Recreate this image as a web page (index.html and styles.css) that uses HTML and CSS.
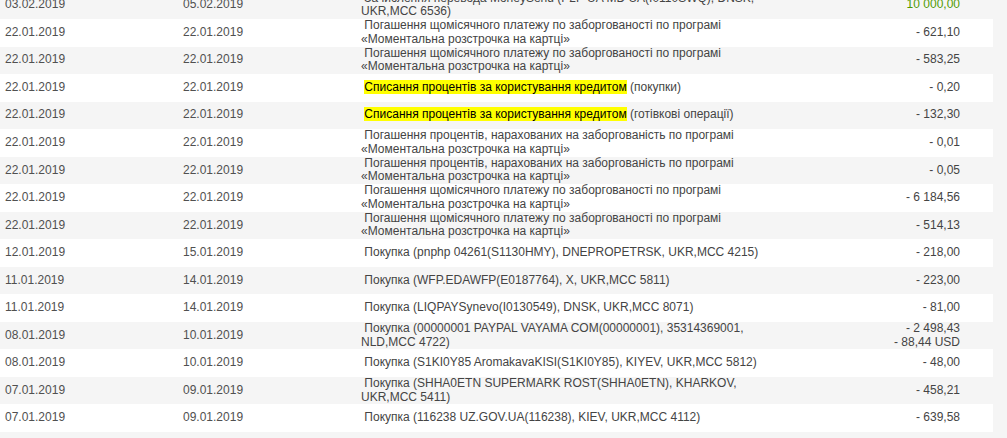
FILE: index.html
```html
<!DOCTYPE html>
<html lang="uk">
<head>
<meta charset="utf-8">
<title>Операції</title>
<link rel="stylesheet" href="styles.css">
</head>
<body>
<table class="ops">
<colgroup><col class="c-date"><col class="c-date"><col class="c-desc"><col class="c-sum"></colgroup>
<tbody>
<tr class="odd"><td>03.02.2019</td><td>05.02.2019</td><td class="desc">&nbsp;Зачислення перевода MoneySend (P2P UA MD UA(I0110SWQ), DNSK, UKR,MCC 6536)</td><td class="sum plus">10 000,00</td></tr>
<tr><td>22.01.2019</td><td>22.01.2019</td><td class="desc">&nbsp;Погашення щомісячного платежу по заборгованості по програмі «Моментальна розстрочка на картці»</td><td class="sum">- 621,10</td></tr>
<tr class="odd"><td>22.01.2019</td><td>22.01.2019</td><td class="desc">&nbsp;Погашення щомісячного платежу по заборгованості по програмі «Моментальна розстрочка на картці»</td><td class="sum">- 583,25</td></tr>
<tr><td>22.01.2019</td><td>22.01.2019</td><td class="desc">&nbsp;<span class="hl">Списання процентів за користування кредитом</span> (покупки)</td><td class="sum">- 0,20</td></tr>
<tr class="odd"><td>22.01.2019</td><td>22.01.2019</td><td class="desc">&nbsp;<span class="hl">Списання процентів за користування кредитом</span> (готівкові операції)</td><td class="sum">- 132,30</td></tr>
<tr><td>22.01.2019</td><td>22.01.2019</td><td class="desc">&nbsp;Погашення процентів, нарахованих на заборгованість по програмі «Моментальна розстрочка на картці»</td><td class="sum">- 0,01</td></tr>
<tr class="odd"><td>22.01.2019</td><td>22.01.2019</td><td class="desc">&nbsp;Погашення процентів, нарахованих на заборгованість по програмі «Моментальна розстрочка на картці»</td><td class="sum">- 0,05</td></tr>
<tr><td>22.01.2019</td><td>22.01.2019</td><td class="desc">&nbsp;Погашення щомісячного платежу по заборгованості по програмі «Моментальна розстрочка на картці»</td><td class="sum">- 6 184,56</td></tr>
<tr class="odd"><td>22.01.2019</td><td>22.01.2019</td><td class="desc">&nbsp;Погашення щомісячного платежу по заборгованості по програмі «Моментальна розстрочка на картці»</td><td class="sum">- 514,13</td></tr>
<tr><td>12.01.2019</td><td>15.01.2019</td><td class="desc">&nbsp;Покупка (pnphp 04261(S1130HMY), DNEPROPETRSK, UKR,MCC 4215)</td><td class="sum">- 218,00</td></tr>
<tr class="odd"><td>11.01.2019</td><td>14.01.2019</td><td class="desc">&nbsp;Покупка (WFP.EDAWFP(E0187764), X, UKR,MCC 5811)</td><td class="sum">- 223,00</td></tr>
<tr><td>11.01.2019</td><td>14.01.2019</td><td class="desc">&nbsp;Покупка (LIQPAYSynevo(I0130549), DNSK, UKR,MCC 8071)</td><td class="sum">- 81,00</td></tr>
<tr class="odd"><td>08.01.2019</td><td>10.01.2019</td><td class="desc">&nbsp;Покупка (00000001 PAYPAL VAYAMA COM(00000001), 35314369001, NLD,MCC 4722)</td><td class="sum">- 2 498,43<br>- 88,44 USD</td></tr>
<tr><td>08.01.2019</td><td>10.01.2019</td><td class="desc">&nbsp;Покупка (S1KI0Y85 AromakavaKISI(S1KI0Y85), KIYEV, UKR,MCC 5812)</td><td class="sum">- 48,00</td></tr>
<tr class="odd"><td>07.01.2019</td><td>09.01.2019</td><td class="desc">&nbsp;Покупка (SHHA0ETN SUPERMARK ROST(SHHA0ETN), KHARKOV, UKR,MCC 5411)</td><td class="sum">- 458,21</td></tr>
<tr><td>07.01.2019</td><td>09.01.2019</td><td class="desc">&nbsp;Покупка (116238 UZ.GOV.UA(116238), KIEV, UKR,MCC 4112)</td><td class="sum">- 639,58</td></tr>
</tbody>
</table>
</body>
</html>
```

FILE: styles.css
```css
html, body {
  margin: 0;
  padding: 0;
  background: #f5f5f5;
}

body {
  font-family: "Liberation Sans", Arial, sans-serif;
  font-size: 12px;
  color: #505050;
}

.ops {
  width: 993px;
  border-collapse: collapse;
  table-layout: fixed;
  margin-top: -8.5px;
}

.c-date { width: 178px; }
.c-desc { width: 410px; }
.c-sum { width: 227px; }

.ops tr { background: #ffffff; }
.ops tr.odd { background: #f5f5f5; }

.ops td {
  height: 27.53px;
  padding: 0 5px;
  line-height: 13.76px;
  vertical-align: middle;
  white-space: nowrap;
}

.ops td.desc {
  white-space: normal;
  color: #444444;
}

.ops td.sum {
  text-align: right;
  padding-right: 33px;
  color: #444444;
}

.ops td.plus { color: #4f9a00; }

.hl {
  background: #ffff00;
  color: #000000;
}
```
